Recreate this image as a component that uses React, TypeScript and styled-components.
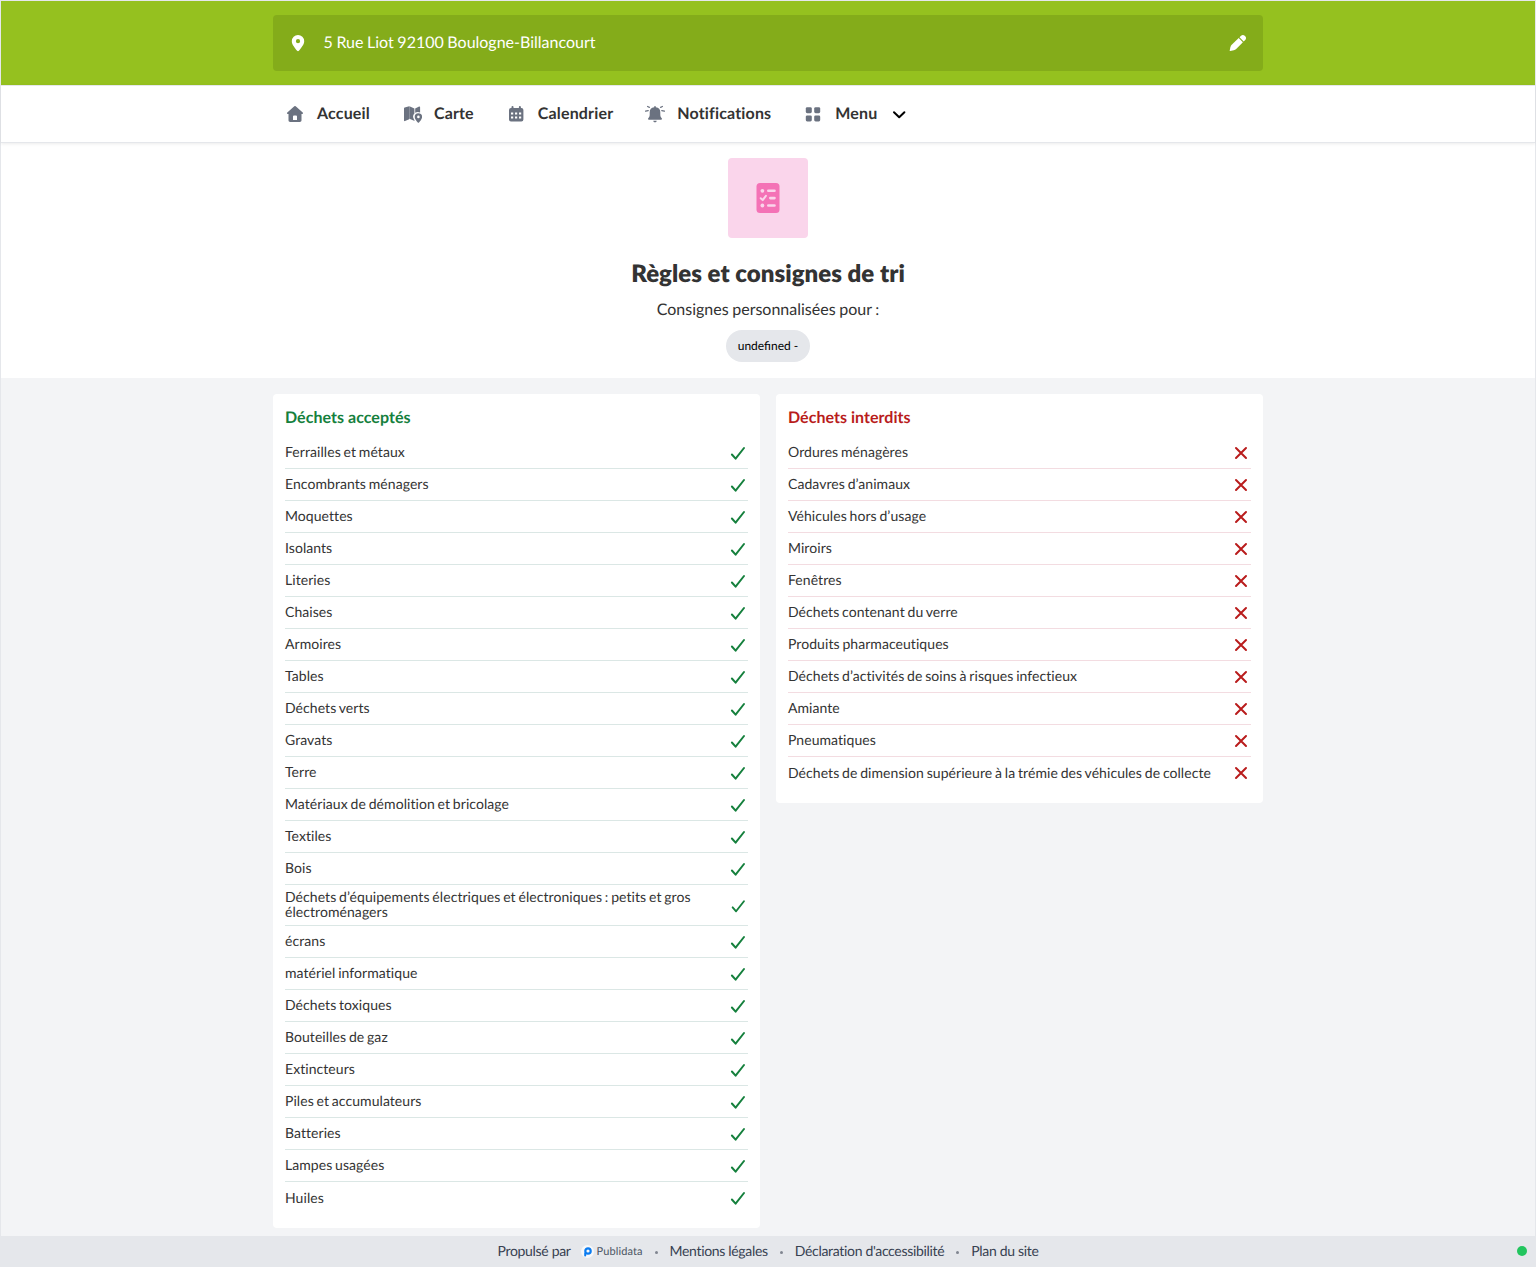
import React from "react";
import styled, { createGlobalStyle } from "styled-components";

const GlobalStyle = createGlobalStyle`
  *, *::before, *::after { box-sizing: border-box; }
  body {
    margin: 0;
    background: #f3f4f6;
    color: #333;
    font-family: Lato, "Open Sans", sans-serif;
    font-size: 16px;
    line-height: 24px;
    text-rendering: geometricPrecision;
    -webkit-font-smoothing: antialiased;
  }
  h1, h2, p, ul { margin: 0; padding: 0; }
  ul { list-style: none; }
  svg { display: block; flex: none; }
`;

const Page = styled.div`
  display: flex;
  flex-direction: column;
  height: 1267px;
  border: 1px solid #e5e7eb;
  border-bottom: 0;
`;

const Header = styled.header`
  padding: 14px 0;
  background: #95c11f;
`;

const Container = styled.div`
  width: 990px;
  margin: 0 auto;
`;

const AddressBar = styled(Container)`
  display: flex;
  align-items: center;
  height: 56px;
  padding: 0 15px;
  border-radius: 4px;
  background: #84ac1a;
  color: #fff;
`;

const Address = styled.span`
  flex: 1;
  padding: 0 0 1px 15.5px;
  word-spacing: -0.5px;
`;

const Nav = styled.nav`
  height: 58px;
  background: #fff;
  border-top: 1px solid #e5e7eb;
  border-bottom: 1px solid #e5e7eb;
  box-shadow: 0 1px 3px rgba(0, 0, 0, 0.08);
  z-index: 1;
`;

const NavList = styled(Container)`
  display: flex;
  align-items: center;
  gap: 32px;
  height: 56px;
  padding: 0 12px;
`;

const NavItem = styled.a`
  display: flex;
  align-items: center;
  gap: 12px;
  font-weight: 700;
  letter-spacing: 0.16px;
  svg { color: #6b7280; }
`;

const NavLabel = styled.span`
  font-variant-ligatures: no-common-ligatures;
`;

const Chevron = styled.span`
  padding-left: 3px;
  svg { color: #000; }
`;

const Hero = styled.section`
  display: flex;
  flex-direction: column;
  align-items: center;
  height: 235px;
  padding-top: 15px;
  background: #fff;
`;

const HeroIcon = styled.div`
  display: flex;
  align-items: center;
  justify-content: center;
  width: 80px;
  height: 80px;
  border-radius: 4px;
  background: #fad5eb;
  color: #f472b6;
`;

const Title = styled.h1`
  margin-top: 20px;
  font-size: 24px;
  line-height: 32px;
  font-weight: 800;
  letter-spacing: 0.04px;
`;

const Subtitle = styled.p`
  margin-top: 8px;
  word-spacing: -0.5px;
`;

const Pill = styled.span`
  margin-top: 8px;
  padding: 0 12px;
  border-radius: 16px;
  background: #e5e7eb;
  color: #000;
  font-size: 12px;
  line-height: 32px;
`;

const Columns = styled(Container)`
  flex: 1;
  display: grid;
  grid-template-columns: 1fr 1fr;
  align-items: start;
  gap: 16px;
  padding-top: 16px;
`;

const Card = styled.section`
  padding: 12px 12px 14px;
  border-radius: 4px;
  background: #fff;
`;

const CardTitle = styled.h2<{ $color: string }>`
  margin-bottom: 7px;
  color: ${(p) => p.$color};
  font-size: 16px;
  line-height: 24px;
  font-weight: 700;
  letter-spacing: 0.04px;
`;

const Row = styled.li<{ $line: string; $color: string }>`
  display: flex;
  align-items: center;
  justify-content: space-between;
  min-height: 32px;
  padding: 5px 0;
  border-bottom: 1px solid ${(p) => p.$line};
  font-size: 14px;
  line-height: 15px;
  svg { flex-shrink: 0.5; color: ${(p) => p.$color}; margin: -2px 0 -1px; }
  &:last-child { border-bottom: 0; }
  &:last-child svg { margin-top: -3px; }
`;

const RowText = styled.span`
  margin: -1px 0 1px;
  letter-spacing: 0.06px;
  word-spacing: -0.85px;
  font-variant-ligatures: no-common-ligatures;
`;

const Footer = styled.footer`
  display: flex;
  align-items: center;
  justify-content: center;
  position: relative;
  height: 31px;
  background: #e5e7eb;
  color: #374151;
  font-size: 14px;
  letter-spacing: -0.32px;
`;

const FooterText = styled.span`
  padding-bottom: 1px;
`;

const Brand = styled.span`
  display: flex;
  align-items: center;
  gap: 3px;
  margin-left: 10px;
  color: #4b5563;
  font-size: 11px;
  letter-spacing: 0.1px;
`;

const Dot = styled.span`
  width: 3px;
  height: 3px;
  margin: 2px 12px 0;
  border-radius: 50%;
  background: #808690;
`;

const Status = styled.span`
  position: absolute;
  right: 8px;
  top: 10px;
  width: 10px;
  height: 10px;
  border-radius: 50%;
  background: #22c55e;
`;

const PinIcon = () => (
  <svg width="20" height="20" viewBox="0 0 20 20">
    <path fill="currentColor" fillRule="evenodd" d="M10 2a6.200 6.200 0 0 0-6.200 6.200c0 3.100 3 6.700 5.300 9.500.5.600 1.300.6 1.800 0 2.300-2.800 5.300-6.400 5.300-9.500A6.200 6.200 0 0 0 10 2zm0 4.100a2.100 2.100 0 1 1 0 4.200 2.100 2.100 0 0 1 0-4.200z" />
  </svg>
);

const PencilIcon = () => (
  <svg width="20" height="20" viewBox="0 0 20 20" fill="currentColor">
    <path d="M10.700 5.100 14.900 9.300 8.200 16q-1 1-2.400 1.300L2.200 18a.5.5 0 0 1-.5-.5l.7-3.300q.3-1.400 1.300-2.400z" />
    <path d="m11.500 4.300 1.300-1.300a2.900 2.900 0 0 1 4.200 4.200l-1.300 1.300z" />
  </svg>
);

const HomeIcon = () => (
  <svg width="20" height="20" viewBox="0 0 20 20">
    <path fill="currentColor" fillRule="evenodd" d="M9.300 2.300a1 1 0 0 1 1.400 0l7 6.300c.7.700.3 1.400-.5 1.400h-.7v6.300c0 1-.7 1.700-1.700 1.700H5.200c-1 0-1.700-.7-1.700-1.700V10h-.7c-.8 0-1.200-.7-.5-1.400zM9 11.500a1 1 0 0 0-1 1V16h4v-3.500a1 1 0 0 0-1-1z" />
  </svg>
);

const MapIcon = () => (
  <svg width="20" height="20" viewBox="0 0 20 20">
    <path fill="currentColor" d="M2 4.500c0-.5.300-.9.700-1L7.200 2.200v13l-4.200 1.900c-.6.200-1-.1-1-.7zM7.400 2.300l5 2.200v5a4.600 4.600 0 0 0-.6 5.500l.9 2-5.300-2.200zM13.200 4.600l3.900-2c.6-.2 1 .1 1 .7v5.200a5 5 0 0 0-4.900.3z" />
    <path fill="currentColor" fillRule="evenodd" d="M16.400 9.200a3.700 3.700 0 0 1 3.700 3.700c0 1.900-2.100 4.400-3.100 5.500-.4.400-.8.400-1.200 0-1-1.100-3.100-3.600-3.100-5.500a3.700 3.700 0 0 1 3.700-3.700zm0 2.400a1.300 1.300 0 1 0 0 2.600 1.300 1.300 0 0 0 0-2.600z" />
  </svg>
);

const CalendarIcon = () => (
  <svg width="20" height="20" viewBox="0 0 20 20" fill="currentColor">
    <rect x="5.500" y="2" width="2" height="4" rx="1" />
    <rect x="12.900" y="2" width="2" height="4" rx="1" />
    <path fillRule="evenodd" d="M5 4h10.400a2 2 0 0 1 2 2v9.500a2 2 0 0 1-2 2H5a2 2 0 0 1-2-2V6a2 2 0 0 1 2-2zM5 8.500v2h2.200v-2zm4 0v2h2.200v-2zm4 0v2h2.200v-2zM5 12.500v2h2.200v-2zm4 0v2h2.200v-2zm4 0v2h2.200v-2z" />
  </svg>
);

const BellIcon = () => (
  <svg width="20" height="20" viewBox="0 0 20 20">
    <path fill="currentColor" d="M9.200 2.800a.8.800 0 0 1 1.600 0v.5a5 5 0 0 1 4.500 5v2.100c0 1.900.6 2.900 1.300 3.700.8.900.4 1.700-.6 1.700H4c-1 0-1.400-.8-.6-1.700.7-.8 1.300-1.800 1.300-3.700V8.300a5 5 0 0 1 4.500-5zM8.300 16.800h3.400c-.1 1-.8 1.500-1.700 1.500s-1.600-.5-1.700-1.500z" />
    <path stroke="currentColor" strokeWidth="1.300" strokeLinecap="round" d="m2.600 2.500 1.800.8M.6 7.200l2.600-.5M17.400 2.500l-1.800.8M19.400 7.200l-2.600-.5" />
  </svg>
);

const GridIcon = () => (
  <svg width="20" height="20" viewBox="0 0 20 20" fill="currentColor">
    <rect x="2.800" y="3.200" width="6" height="6" rx="1.400" />
    <rect x="11.200" y="3.200" width="6" height="6" rx="1.400" />
    <rect x="2.800" y="11.400" width="6" height="6" rx="1.400" />
    <rect x="11.200" y="11.400" width="6" height="6" rx="1.400" />
  </svg>
);

const ChevronIcon = () => (
  <svg width="14" height="20" viewBox="0 0 14 20" fill="none">
    <path stroke="currentColor" strokeWidth="2" strokeLinecap="round" strokeLinejoin="round" d="M2 8.300 7.200 13.300 12.400 8.300" />
  </svg>
);

const ChecklistIcon = () => (
  <svg width="24" height="32" viewBox="0 0 24 32">
    <rect x=".5" y="1" width="23" height="30" rx="3.500" fill="currentColor" />
    <g stroke="#fad5eb" strokeWidth="2.600" strokeLinecap="round" fill="none">
      <path d="M12.300 8.800h6.200M14.300 16.100h4.200M12.300 23.500h6.200" />
      <path d="m4.700 16.200 2 1.900 3.200-4.300" strokeWidth="2" strokeLinejoin="round" />
    </g>
    <circle cx="6.400" cy="8.800" r="1.900" fill="#fad5eb" />
    <circle cx="6.400" cy="23.500" r="1.900" fill="#fad5eb" />
  </svg>
);

const CheckIcon = () => (
  <svg width="20" height="20" viewBox="0 0 20 20" fill="none">
    <path stroke="currentColor" strokeWidth="2" strokeLinecap="round" strokeLinejoin="round" d="m3.900 12.500 3.700 4.200L16 6" />
  </svg>
);

const CrossIcon = () => (
  <svg width="20" height="20" viewBox="0 0 20 20" fill="none">
    <path stroke="currentColor" strokeWidth="2" strokeLinecap="round" d="m5 6 10 10m0-10-10 10" />
  </svg>
);

const BrandMark = () => (
  <svg width="13" height="13" viewBox="0 0 13 13" fill="none">
    <circle cx="6.500" cy="6.500" r="6.500" fill="#f7f8fa" />
    <circle cx="7" cy="6" r="2.700" stroke="#0b7cf0" strokeWidth="2.200" />
    <path stroke="#0b7cf0" strokeWidth="2" strokeLinecap="round" d="M4.200 8.500v2" />
  </svg>
);

const navItems = [
  { label: "Accueil", Icon: HomeIcon },
  { label: "Carte", Icon: MapIcon },
  { label: "Calendrier", Icon: CalendarIcon },
  { label: "Notifications", Icon: BellIcon },
  { label: "Menu", Icon: GridIcon, expandable: true },
];

const accepted = [
  "Ferrailles et métaux", "Encombrants ménagers", "Moquettes", "Isolants", "Literies", "Chaises",
  "Armoires", "Tables", "Déchets verts", "Gravats", "Terre", "Matériaux de démolition et bricolage",
  "Textiles", "Bois",
  "Déchets d’équipements électriques et électroniques : petits et gros électroménagers",
  "écrans", "matériel informatique", "Déchets toxiques", "Bouteilles de gaz", "Extincteurs",
  "Piles et accumulateurs", "Batteries", "Lampes usagées", "Huiles",
];

const refused = [
  "Ordures ménagères", "Cadavres d’animaux", "Véhicules hors d’usage", "Miroirs", "Fenêtres",
  "Déchets contenant du verre", "Produits pharmaceutiques",
  "Déchets d’activités de soins à risques infectieux", "Amiante", "Pneumatiques",
  "Déchets de dimension supérieure à la trémie des véhicules de collecte",
];

interface WasteCardProps {
  title: string;
  items: string[];
  color: string;
  line: string;
  Icon: React.ComponentType;
}

const WasteCard = ({ title, items, color, line, Icon }: WasteCardProps) => (
  <Card>
    <CardTitle $color={color}>{title}</CardTitle>
    <ul>
      {items.map((item) => (
        <Row key={item} $line={line} $color={color}>
          <RowText>{item}</RowText>
          <Icon />
        </Row>
      ))}
    </ul>
  </Card>
);

export default function App() {
  return (
    <>
      <GlobalStyle />
      <Page>
        <Header>
          <AddressBar>
            <PinIcon />
            <Address>5 Rue Liot 92100 Boulogne-Billancourt</Address>
            <PencilIcon />
          </AddressBar>
        </Header>
        <Nav>
          <NavList>
            {navItems.map(({ label, Icon, expandable }) => (
              <NavItem key={label}>
                <Icon />
                <NavLabel>{label}</NavLabel>
                {expandable && <Chevron><ChevronIcon /></Chevron>}
              </NavItem>
            ))}
          </NavList>
        </Nav>
        <Hero>
          <HeroIcon><ChecklistIcon /></HeroIcon>
          <Title>Règles et consignes de tri</Title>
          <Subtitle>Consignes personnalisées pour :</Subtitle>
          <Pill>undefined -</Pill>
        </Hero>
        <Columns>
          <WasteCard title="Déchets acceptés" items={accepted} color="#15803d" line="#dbe7e5" Icon={CheckIcon} />
          <WasteCard title="Déchets interdits" items={refused} color="#b91c1c" line="#f3dce1" Icon={CrossIcon} />
        </Columns>
        <Footer>
          <FooterText>Propulsé par</FooterText>
          <Brand><BrandMark />Publidata</Brand>
          <Dot />
          <FooterText>Mentions légales</FooterText>
          <Dot />
          <FooterText>Déclaration d'accessibilité</FooterText>
          <Dot />
          <FooterText>Plan du site</FooterText>
          <Status />
        </Footer>
      </Page>
    </>
  );
}
